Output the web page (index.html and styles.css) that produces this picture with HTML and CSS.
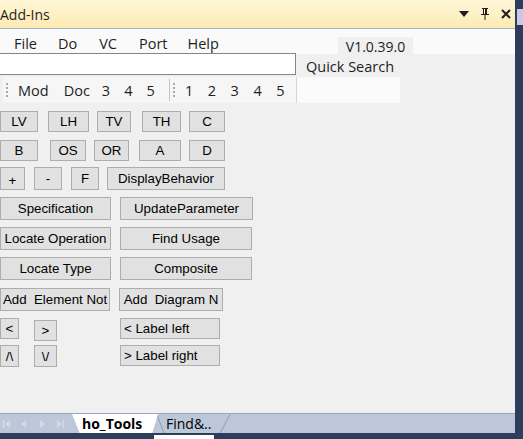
FILE: index.html
```html
<!DOCTYPE html>
<html>
<head>
<meta charset="utf-8">
<link rel="stylesheet" href="styles.css">
</head>
<body>
<div class="app">
  <div class="panel">
    <div class="titlebar">
      <span class="title">Add-Ins</span>
      <div class="tools">
        <svg width="10" height="6" viewBox="0 0 10 6"><path d="M0 0H10L5 6Z" fill="#1e1e1e"/></svg>
        <svg width="10" height="12" viewBox="0 0 10 12"><path d="M2 0H8V1H7V6H9V7H5.5V12H4.5V7H1V6H3V1H2Z M4 1V6H5V1Z" fill="#1e1e1e"/></svg>
        <svg width="10" height="10" viewBox="0 0 10 10"><path d="M1 1L9 9M9 1L1 9" stroke="#1e1e1e" stroke-width="2"/></svg>
      </div>
    </div>
    <div class="menurow">
      <div class="menu">
        <span class="mi m-file">File</span>
        <span class="mi m-do">Do</span>
        <span class="mi m-vc">VC</span>
        <span class="mi m-port">Port</span>
        <span class="mi m-help">Help</span>
      </div>
      <div class="version">V1.0.39.0</div>
    </div>
    <div class="searchrow">
      <div class="searchbox"></div>
      <div class="qs">Quick Search</div>
    </div>
    <div class="toolrow">
      <div class="strip s1">
        <span class="grip"></span>
        <span class="ti t-mod">Mod</span>
        <span class="ti t-doc">Doc</span>
        <span class="ti t-n1">3</span>
        <span class="ti t-m">4</span>
        <span class="ti t-m">5</span>
      </div>
      <span class="sep"></span>
      <div class="strip s2">
        <span class="grip"></span>
        <span class="ti t-first">1</span>
        <span class="ti t-n">2</span>
        <span class="ti t-n">3</span>
        <span class="ti t-n">4</span>
        <span class="ti t-n">5</span>
      </div>
      <div class="blank"></div>
    </div>
    <div class="buttons">
      <div class="row r1">
        <div class="btn w38">LV</div>
        <div class="btn ml10 w41">LH</div>
        <div class="btn ml8 w34">TV</div>
        <div class="btn ml11 w39">TH</div>
        <div class="btn ml8 w36">C</div>
      </div>
      <div class="row r2">
        <div class="btn w38">B</div>
        <div class="btn ml12 w36">OS</div>
        <div class="btn ml8 w35">OR</div>
        <div class="btn ml10 w42">A</div>
        <div class="btn ml8 w36">D</div>
      </div>
      <div class="row r3">
        <div class="btn w25 low">+</div>
        <div class="btn ml9 w28">-</div>
        <div class="btn ml9 w28">F</div>
        <div class="btn ml8 w118">DisplayBehavior</div>
      </div>
      <div class="row r4">
        <div class="btn w111">Specification</div>
        <div class="btn ml9 w133">UpdateParameter</div>
      </div>
      <div class="row r5">
        <div class="btn w111">Locate Operation</div>
        <div class="btn ml9 w132">Find Usage</div>
      </div>
      <div class="row r6">
        <div class="btn w111">Locate Type</div>
        <div class="btn ml9 w132">Composite</div>
      </div>
      <div class="row r7">
        <div class="btn w110">Add&nbsp; Element Not</div>
        <div class="btn ml9 w104">Add&nbsp; Diagram N</div>
      </div>
      <div class="row r8">
        <div class="btn w19 h21">&lt;</div>
        <div class="btn ml15 w23 h21 down2">&gt;</div>
        <div class="btn ml63 w100 h21 left">&lt; Label left</div>
      </div>
      <div class="row r9">
        <div class="btn w19 h22">/\</div>
        <div class="btn ml15 w23 h22">\/</div>
        <div class="btn ml63 w100 h21 left">&gt; Label right</div>
      </div>
    </div>
    <div class="spacer"></div>
    <div class="tabbar">
      <div class="nav">
        <svg width="70" height="12" viewBox="0 0 70 12">
          <g fill="#d3dae6">
            <rect x="3" y="2" width="1.5" height="8"/>
            <path d="M10 2V10L5 6Z"/>
            <path d="M26 2V10L21 6Z"/>
            <path d="M40 2V10L45 6Z"/>
            <path d="M57 2V10L62 6Z"/>
            <rect x="62.5" y="2" width="1.5" height="8"/>
          </g>
        </svg>
      </div>
      <svg class="tabshape" width="160" height="20" viewBox="0 0 160 20">
        <path d="M85 0.5L92 19.5H148L158 0.5" fill="#bcc7d9" stroke="#8e9bb2" stroke-width="1"/>
        <path d="M0 0L8 20H80L86 0Z" fill="#ffffff"/>
      </svg>
      <div class="tab active">ho_Tools</div>
      <div class="tab inactive">Find&amp;..</div>
    </div>
    <div class="bottomstrip"><span class="mark"></span></div>
  </div>
  <div class="edge"><span class="edgemark"></span></div>
</div>
</body>
</html>
```
FILE: styles.css
```css
html, body {
  margin: 0;
  padding: 0;
}
body {
  width: 523px;
  height: 439px;
  overflow: hidden;
  font-family: "Liberation Sans", Arial, sans-serif;
  background: #f0f0f0;
}
.app {
  display: flex;
  width: 523px;
  height: 439px;
}
.panel {
  width: 515px;
  display: flex;
  flex-direction: column;
  background: #f0f0f0;
  position: relative;
}
.edge {
  width: 8px;
  background: #2d3d5c;
  position: relative;
}
.edgemark {
  position: absolute;
  left: 2px;
  top: 9px;
  width: 6px;
  height: 16px;
  background: #c9c9e6;
}
.titlebar {
  height: 28px;
  border-bottom: 1px solid #a7b3c8;
  background: linear-gradient(#fff7d8, #fdeab3);
  display: flex;
  align-items: center;
  justify-content: space-between;
  font-family: "Open Sans", "Noto Sans", sans-serif;
  font-size: 14px;
  color: #1e1e1e;
}
.tools {
  display: flex;
  align-items: center;
  gap: 11px;
  margin-right: 4px;
}
.menurow {
  height: 25px;
  background: #fafafa;
  display: flex;
  align-items: flex-start;
  font-family: "Open Sans", "Noto Sans", sans-serif;
  font-size: 14.5px;
  color: #1e1e1e;
}
.menu {
  width: 338px;
  display: flex;
  height: 25px;
  align-items: center;
  padding-top: 3px;
  box-sizing: border-box;
}
.mi { display: block; }
.m-file { margin-left: 14px; }
.m-do { margin-left: 21px; }
.m-vc { margin-left: 22px; }
.m-port { margin-left: 22px; }
.m-help { margin-left: 20px; }
.version {
  margin-top: 8px;
  width: 75px;
  height: 20px;
  line-height: 20px;
  font-size: 14px;
  background: #f0f0f0;
  text-align: center;
  position: relative;
  z-index: 1;
}
.searchrow {
  display: flex;
  height: 21px;
  font-family: "Open Sans", "Noto Sans", sans-serif;
  font-size: 14.5px;
  color: #1e1e1e;
}
.searchbox {
  width: 296px;
  background: #fff;
  border: 1px solid #858585;
  border-left: none;
  box-sizing: border-box;
  height: 22px;
  margin-top: -1px;
}
.qs {
  margin-left: 10px;
  margin-top: 3px;
  line-height: 20px;
  position: relative;
  z-index: 1;
}
.toolrow {
  margin-top: 2px;
  height: 26px;
  display: flex;
  align-items: stretch;
  font-family: "Open Sans", "Noto Sans", sans-serif;
  font-size: 14.5px;
  color: #1e1e1e;
}
.strip {
  display: flex;
  align-items: center;
  background: #f6f6f6;
}
.s1 { margin-left: 3px; width: 166px; }
.s2 { width: 126px; border-right: 1px solid #d6d6d6; }
.sep {
  width: 1px;
  background: #c4c4c4;
  margin: 2px 0;
}
.grip {
  width: 2px;
  height: 14px;
  margin-left: 3px;
  background: repeating-linear-gradient(#a9a9a9 0 2px, transparent 2px 4px);
}
.ti { display: block; }
.t-mod { margin-left: 10px; }
.t-doc { margin-left: 15px; }
.t-n1 { margin-left: 12px; }
.t-m { margin-left: 14px; }
.t-n { margin-left: 14.5px; }
.t-first { margin-left: 10px; }
.blank {
  width: 103px;
  background: #fbfbfb;
}
.buttons {
  display: flex;
  flex-direction: column;
  margin-top: 8px;
}
.row {
  display: flex;
  align-items: flex-start;
  height: 22px;
}
.r1 { margin-top: 0; }
.r2 { margin-top: 7px; }
.r3 { margin-top: 5px; }
.r4 { margin-top: 8px; }
.r5 { margin-top: 8px; }
.r6 { margin-top: 8px; }
.r7 { margin-top: 9px; }
.r8 { margin-top: 8px; }
.r9 { margin-top: 5px; }
.btn {
  box-sizing: border-box;
  height: 21px;
  border: 1px solid #adadad;
  background: #e1e1e1;
  font-size: 13.3px;
  color: #000;
  display: flex;
  align-items: center;
  justify-content: center;
  white-space: nowrap;
  overflow: hidden;
}
.r3 .btn, .r4 .btn, .r5 .btn, .r6 .btn, .r7 .btn { height: 23px; }
.low { padding-top: 4px; }
.h21 { height: 21px; }
.h22 { height: 22px; }
.down2 { margin-top: 2px; }
.left { justify-content: flex-start; padding-left: 3px; }
.w19 { width: 19px; }
.w23 { width: 23px; }
.w25 { width: 25px; }
.w28 { width: 28px; }
.w34 { width: 34px; }
.w35 { width: 35px; }
.w36 { width: 36px; }
.w38 { width: 38px; }
.w39 { width: 39px; }
.w41 { width: 41px; }
.w42 { width: 42px; }
.w100 { width: 100px; }
.w104 { width: 104px; }
.w110 { width: 110px; }
.w111 { width: 111px; }
.w118 { width: 118px; }
.w132 { width: 132px; }
.w133 { width: 133px; }
.ml8 { margin-left: 8px; }
.ml9 { margin-left: 9px; }
.ml10 { margin-left: 10px; }
.ml11 { margin-left: 11px; }
.ml12 { margin-left: 12px; }
.ml15 { margin-left: 15px; }
.ml63 { margin-left: 63px; }
.spacer { flex: 1; }
.tabbar {
  height: 19px;
  border-top: 1px solid #9aa6bb;
  background: #bcc7d9;
  display: flex;
  align-items: center;
  position: relative;
  font-family: "Open Sans", "Noto Sans", sans-serif;
  font-size: 14px;
  color: #000;
}
.nav {
  width: 72px;
  display: flex;
  align-items: center;
}
.tabshape {
  position: absolute;
  left: 72px;
  top: 0;
}
.tab {
  position: relative;
  z-index: 1;
  line-height: 19px;
}
.active {
  font-weight: bold;
  margin-left: 10px;
  width: 84px;
}
.bottomstrip {
  height: 6px;
  background: #2d3d5c;
  position: relative;
}
.mark {
  position: absolute;
  left: 154px;
  top: 2px;
  width: 60px;
  height: 4px;
  background: #ffffff;
}
```
